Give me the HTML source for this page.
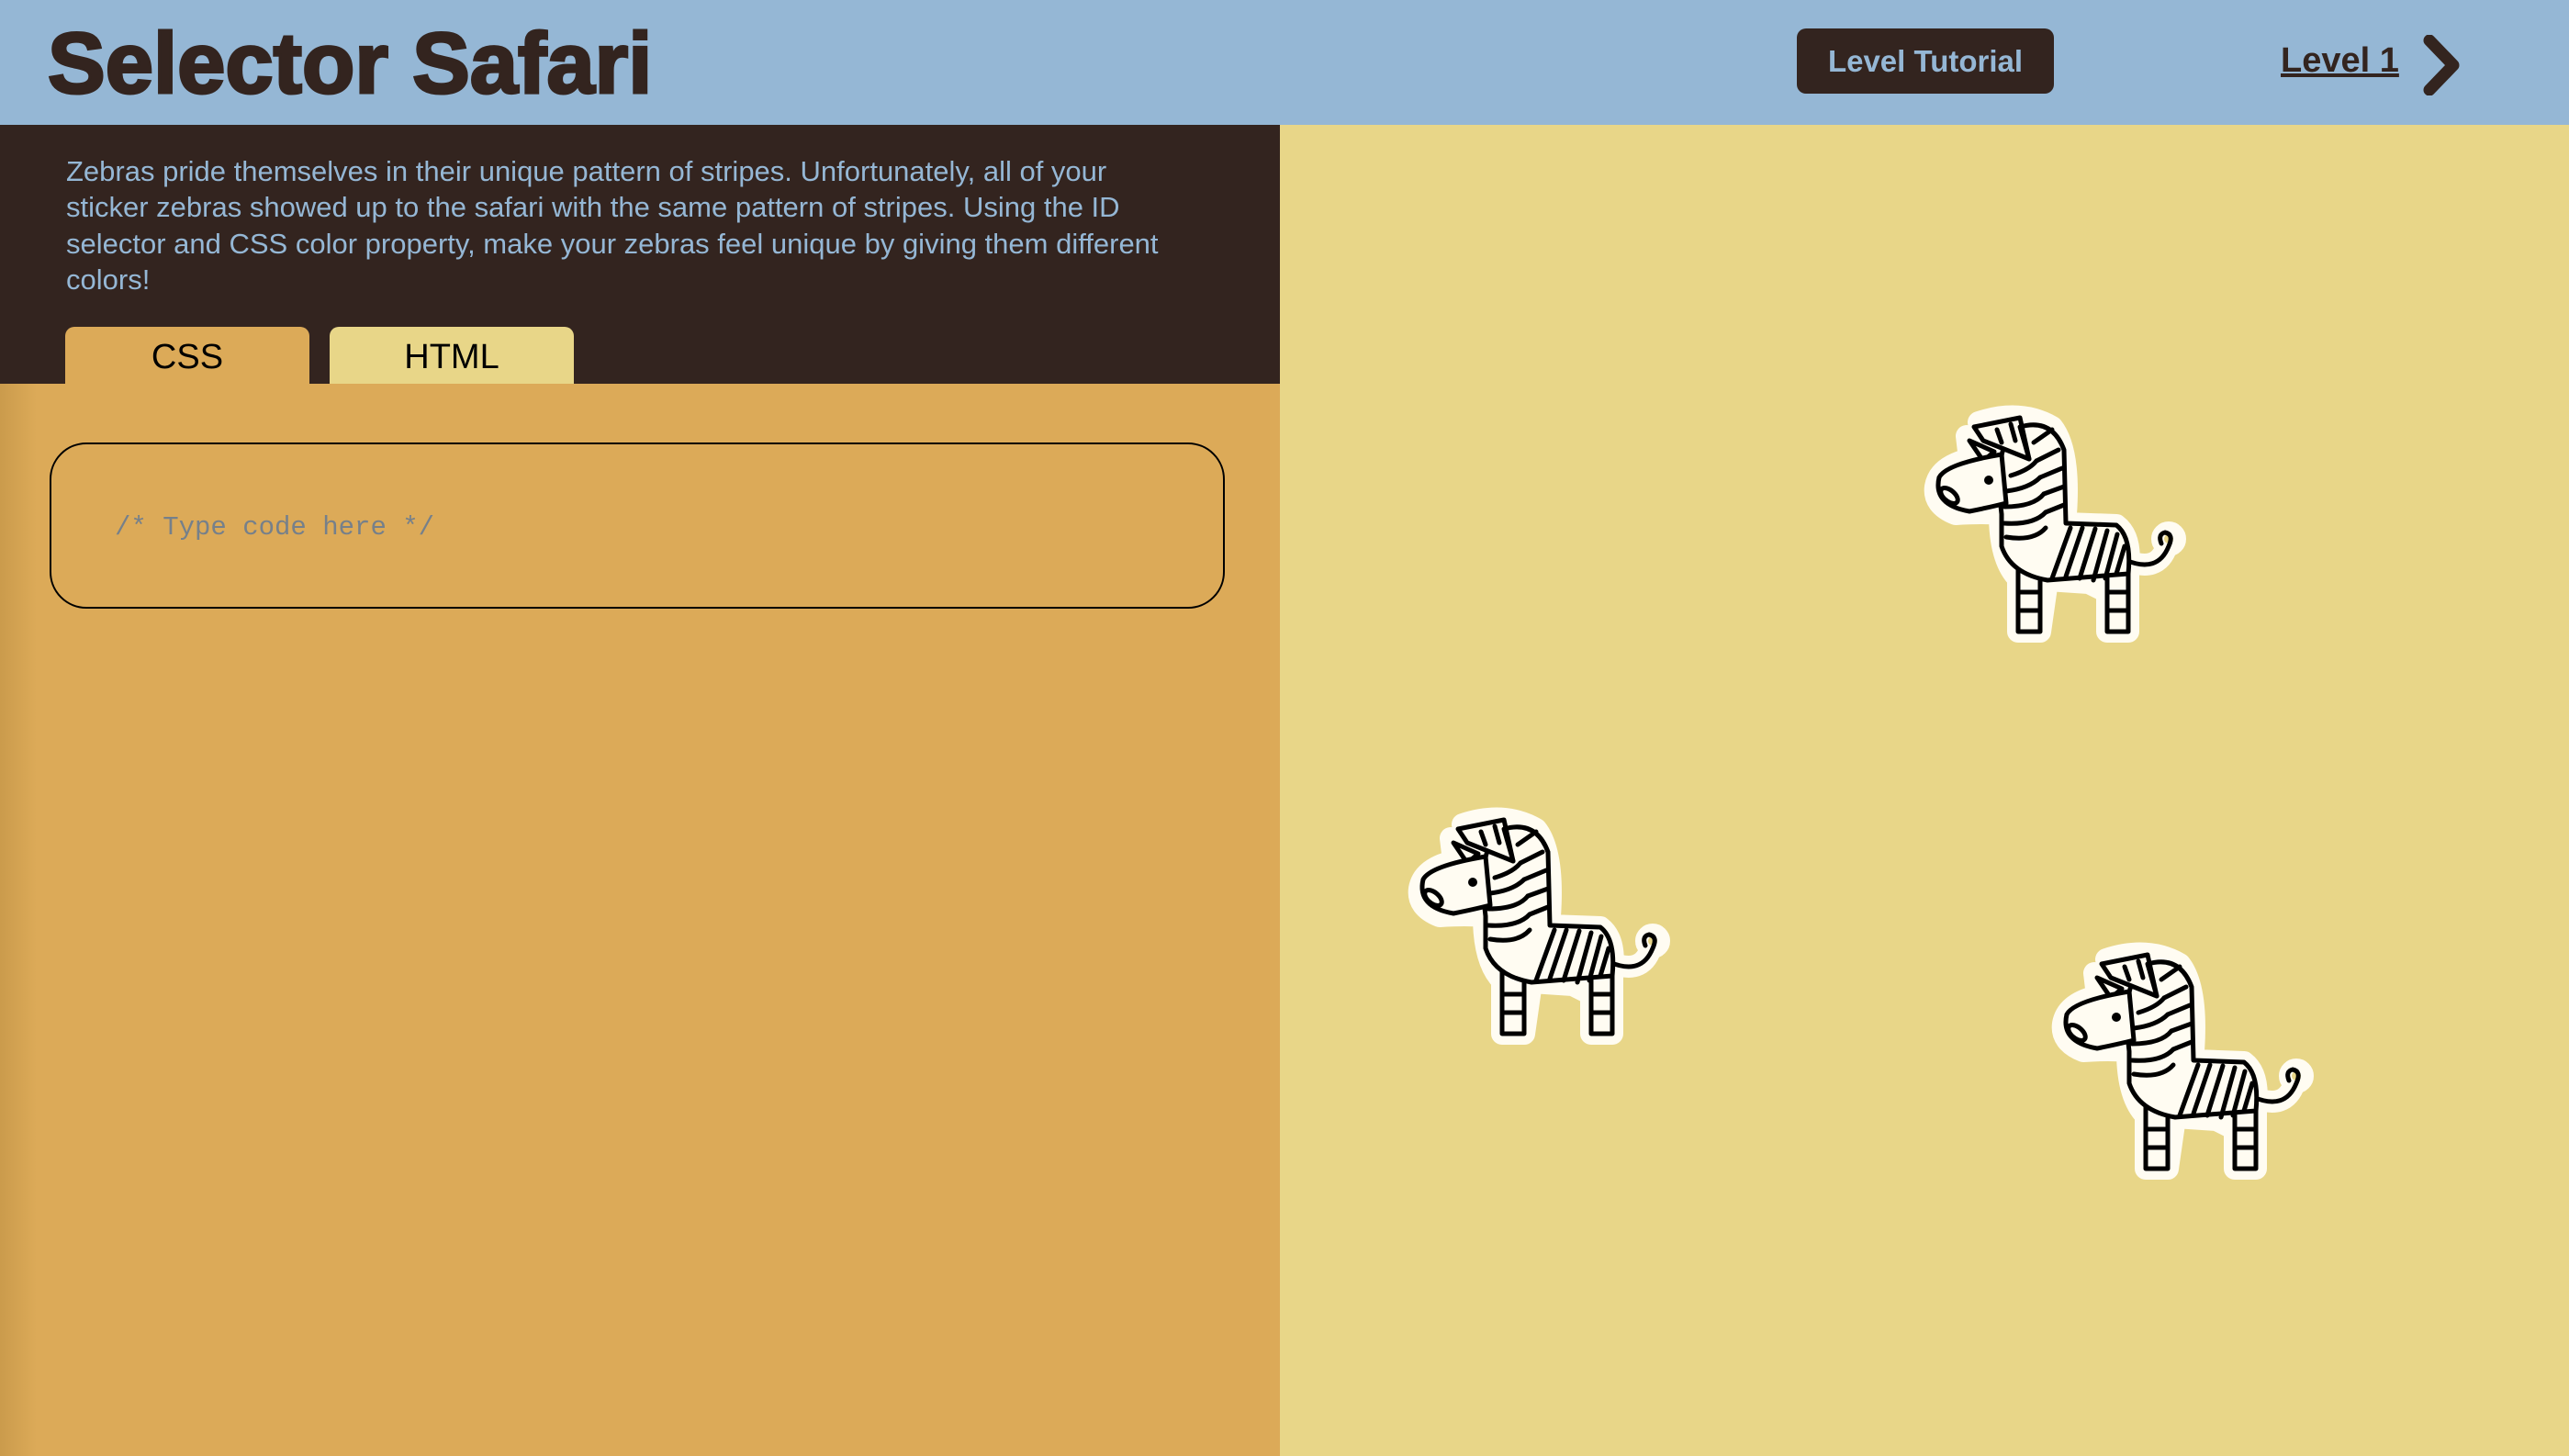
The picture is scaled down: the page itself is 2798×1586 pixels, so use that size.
<!DOCTYPE html>
<html><head><meta charset="utf-8">
<style>
*{margin:0;padding:0;box-sizing:border-box}
body{width:2798px;height:1586px;overflow:hidden;position:relative;background:#e8d688;font-family:"Liberation Sans",sans-serif}
#hdr{position:absolute;left:0;top:0;width:2798px;height:136px;background:#95b7d5}
#title{position:absolute;left:52px;top:12px;font-size:94px;font-weight:bold;color:#33241f;letter-spacing:0px;line-height:114px;-webkit-text-stroke:3px #33241f}
#tut{position:absolute;left:1957px;top:31px;width:280px;height:71px;background:#33241f;border-radius:10px;color:#95b7d5;font-weight:bold;font-size:33px;text-align:center;line-height:71px}
#lvl{position:absolute;left:2484px;top:38px;font-size:38px;font-weight:bold;color:#33241f;text-decoration:underline;text-decoration-thickness:4px;line-height:56px}
#chev{position:absolute;left:2636px;top:38px}
#left{position:absolute;left:0;top:136px;width:1394px;height:1450px;background:#dcaa58}
#left:before{content:"";position:absolute;left:0;top:0;width:40px;height:100%;background:linear-gradient(90deg,rgba(150,110,40,.25),rgba(150,110,40,0))}
#dark{position:absolute;left:0;top:136px;width:1394px;height:282px;background:#33241f}
#desc{position:absolute;left:72px;top:167px;width:1320px;font-size:31px;line-height:39.3px;color:#95b7d5;white-space:nowrap}
.tab{position:absolute;top:356px;width:266px;height:62px;border-radius:10px 10px 0 0;font-size:38px;text-align:center;line-height:66px;color:#000}
#ed{position:absolute;left:54px;top:482px;width:1280px;height:181px;border:2px solid #000;border-radius:40px}
#ph{position:absolute;left:125px;top:558px;font-family:"Liberation Mono",monospace;font-size:29px;color:#76808a}
svg.z{position:absolute;width:350px;height:300px}
</style></head><body>
<div id="hdr"></div>
<div id="title">Selector Safari</div>
<div id="tut">Level Tutorial</div>
<div id="lvl">Level 1</div>
<svg id="chev" width="50" height="66" viewBox="0 0 50 66"><path d="M10 6 L36 33 L10 60" fill="none" stroke="#33241f" stroke-width="13" stroke-linecap="round" stroke-linejoin="round"/></svg>
<div id="left"></div>
<div id="dark"></div>
<div id="desc">Zebras pride themselves in their unique pattern of stripes. Unfortunately, all of your<br>sticker zebras showed up to the safari with the same pattern of stripes. Using the ID<br>selector and CSS color property, make your zebras feel unique by giving them different<br>colors!</div>
<div class="tab" style="left:71px;background:#dcaa58">CSS</div>
<div class="tab" style="left:359px;background:#e8d688">HTML</div>
<div id="ed"></div>
<div id="ph">/* Type code here */</div>

<svg class="z" style="left:2050px;top:420px" viewBox="0 0 350 300"><g id="zz1">
<g fill="#fffcf2" stroke="#fffcf2" stroke-width="24" stroke-linejoin="round"><path d="M105 40 Q150 25 185 45 Q205 70 200 140 L200 150 L255 152 Q272 165 268 200 L268 268 L245 268 L245 225 L225 215 L180 212 L172 268 L148 268 L148 210 Q128 190 128 140 Q110 138 80 140 Q55 130 58 110 Q62 88 95 80 L92 55 L112 65 Z"/><path d="M265 190 Q300 205 310 175" fill="none"/><circle cx="312" cy="167" r="7" fill="none"/></g>
<g fill="#fffcf2" stroke="#000" stroke-width="5" stroke-linejoin="round" stroke-linecap="round">
<path d="M265 190 Q300 205 312 175 Q318 162 308 160 Q300 162 304 172" fill="none"/>
<rect x="148" y="200" width="24" height="68"/><rect x="245" y="200" width="23" height="68"/>
<path d="M130 140 Q120 60 150 45 Q185 35 198 70 L200 150 L255 152 Q272 165 268 205 L180 212 Q140 205 130 175 Z"/>
<path d="M100 45 L150 35 L160 80 L110 60 Z"/>
<path d="M95 60 L122 72 L110 82 Z"/>
<path d="M130 75 Q70 85 62 100 Q55 130 95 137 Q120 132 135 128 Z"/>
<ellipse cx="73" cy="120" rx="6" ry="11" transform="rotate(-50 73 120)"/>
</g>
<circle cx="116" cy="103" r="5" fill="#000"/>
<g stroke="#000" stroke-width="5" fill="none" stroke-linecap="round">
<path d="M135 165 Q165 170 178 155"/><path d="M133 150 Q165 152 178 138"/><path d="M133 132 Q165 132 176 118"/><path d="M135 115 Q160 112 172 100"/><path d="M140 98 Q160 92 168 82"/>
<path d="M178 138 L198 130"/><path d="M176 118 L198 110"/><path d="M172 100 L196 90"/><path d="M168 82 L192 70"/><path d="M165 62 L185 48"/><path d="M160 80 L150 45"/><path d="M125 48 L130 62"/><path d="M140 42 L145 60"/>
<path d="M185 210 L205 155"/><path d="M200 208 L218 155"/><path d="M215 210 L232 156"/><path d="M230 212 L245 158"/><path d="M243 210 L256 162"/><path d="M255 205 L264 175"/>
<path d="M148 225 L172 225"/><path d="M148 245 L172 245"/><path d="M245 225 L268 225"/><path d="M245 245 L268 245"/>
</g></g></svg>

<svg class="z" style="left:1488px;top:858px" viewBox="0 0 350 300"><use href="#zz1"/></svg>
<svg class="z" style="left:2189px;top:1005px" viewBox="0 0 350 300"><use href="#zz1"/></svg>
</body></html>
